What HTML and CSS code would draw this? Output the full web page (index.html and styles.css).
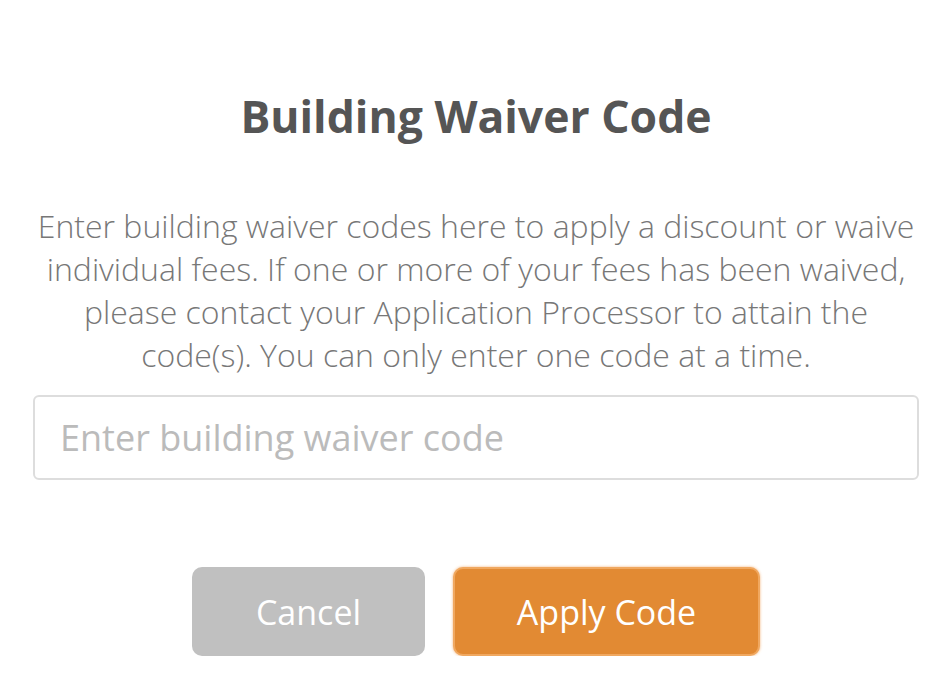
FILE: index.html
```html
<!DOCTYPE html>
<html lang="en">
<head>
<meta charset="utf-8">
<title>Building Waiver Code</title>
<link rel="stylesheet" href="styles.css">
</head>
<body>
<div class="modal">
  <h1 class="title">Building Waiver Code</h1>
  <p class="desc">Enter building waiver codes here to apply a discount or waive individual fees. If one or more of your fees has been waived, please contact your Application Processor to attain the code(s). You can only enter one code at a time.</p>
  <input class="code-input" type="text" placeholder="Enter building waiver code">
  <div class="actions">
    <button class="btn btn-cancel" type="button">Cancel</button>
    <button class="btn btn-apply" type="button">Apply Code</button>
  </div>
</div>
</body>
</html>
```
FILE: styles.css
```css
html, body {
  margin: 0;
  padding: 0;
  background: #ffffff;
}
body {
  font-family: "Open Sans", "Liberation Sans", sans-serif;
}
.modal {
  width: 886px;
  margin-left: 33px;
  padding-top: 84px;
  display: flex;
  flex-direction: column;
  align-items: center;
}
.title {
  margin: 0;
  font-size: 44.5px;
  line-height: 64px;
  font-weight: 700;
  color: #555555;
}
.desc {
  margin: 56px 0 0;
  font-size: 32px;
  line-height: 43px;
  font-weight: 300;
  color: #777777;
  text-align: center;
}
.code-input {
  box-sizing: border-box;
  width: 100%;
  height: 85px;
  margin-top: 19px;
  padding: 0 25px;
  border: 2px solid #dddddd;
  border-radius: 6px;
  font-family: inherit;
  font-size: 36px;
  font-weight: 400;
  color: #555555;
  outline: none;
}
.code-input::placeholder {
  color: #bbbbbb;
}
.actions {
  display: flex;
  gap: 28px;
  margin-top: 87px;
}
.btn {
  height: 89px;
  border-radius: 10px;
  font-family: inherit;
  font-size: 34px;
  font-weight: 400;
  color: #ffffff;
  cursor: pointer;
}
.btn-cancel {
  width: 233px;
  background: #c0c0c0;
  border: none;
}
.btn-apply {
  width: 307px;
  background: #e28a33;
  border: 2px solid #f0a860;
  box-shadow: 0 0 3px rgba(240, 160, 90, 0.8);
}
```
